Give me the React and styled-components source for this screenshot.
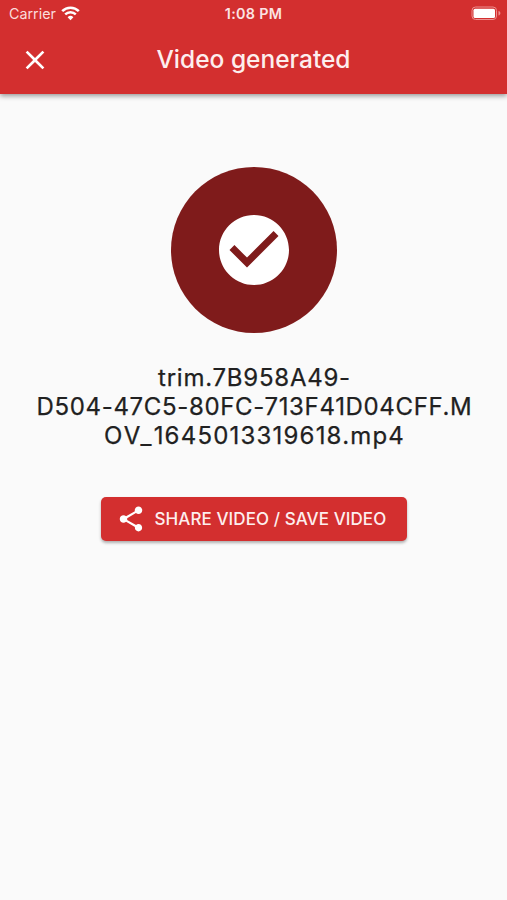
import styled, { createGlobalStyle } from "styled-components";
import { MdCheckCircle, MdClose, MdShare } from "react-icons/md";

const GlobalStyle = createGlobalStyle`
  * {
    box-sizing: border-box;
  }

  body {
    margin: 0;
    background: #fafafa;
    font-family: Inter, "Liberation Sans", sans-serif;
  }
`;

const StyledScreen = styled.div`
  height: 900px;
  overflow: hidden;
  background: #fafafa;
`;

const StyledHeader = styled.header`
  height: 94px;
  background: #d32f2f;
  color: #fff;
  box-shadow: 0 2px 5px rgba(0, 0, 0, 0.4);
`;

const StyledStatusBar = styled.div`
  height: 27px;
  padding: 0 6px 0 9px;
  display: grid;
  grid-template-columns: 1fr auto 1fr;
  align-items: center;
`;

const StyledCarrier = styled.div`
  display: flex;
  align-items: center;
  gap: 5px;
  font-size: 14.3px;
  color: #fbdcdc;
`;

const StyledTime = styled.div`
  margin-right: 3px;
  font-size: 14.3px;
  font-weight: 600;
  letter-spacing: 0.3px;
  color: #fbe3e3;
`;

const StyledBattery = styled.svg`
  justify-self: end;
`;

const StyledToolbar = styled.div`
  height: 65px;
  padding: 0 19px;
  display: grid;
  grid-template-columns: 32px 1fr 32px;
  align-items: center;
`;

const StyledIconButton = styled.button`
  display: flex;
  padding: 0;
  border: none;
  background: none;
  color: #fff;
`;

const StyledTitle = styled.h1`
  margin: 0;
  font-size: 24.5px;
  font-weight: 500;
  line-height: 29px;
  text-align: center;
  color: #fdeeee;
`;

const StyledContent = styled.main`
  display: flex;
  flex-direction: column;
  align-items: center;
  padding-top: 73px;
`;

const StyledBadge = styled.div`
  width: 166px;
  height: 166px;
  border-radius: 50%;
  display: flex;
  align-items: center;
  justify-content: center;
  background: #7f1b1b;
  color: #fff;
`;

const StyledFileName = styled.p`
  margin: 30px 0 0;
  padding-left: 2px;
  font-size: 24px;
  line-height: 29.2px;
  text-align: center;
  color: #212121;
  -webkit-text-stroke: 0.25px #212121;
`;

const StyledLine = styled.span`
  display: block;
  white-space: nowrap;
`;

const StyledPart = styled.span`
  letter-spacing: ${(props) => props.$spacing};
`;

const StyledShareButton = styled.button`
  width: 306px;
  height: 44px;
  margin-top: 46px;
  padding: 0 0 0 15px;
  display: flex;
  align-items: center;
  gap: 9px;
  border: none;
  border-radius: 5px;
  background: #d32f2f;
  color: #fff;
  box-shadow: 0 2px 3px rgba(0, 0, 0, 0.3);
`;

const StyledButtonText = styled.span`
  font-family: Inter, "Liberation Sans", sans-serif;
  font-size: 17px;
  font-weight: 500;
  letter-spacing: 0.08px;
  white-space: nowrap;
  color: #fdeeee;
`;

const fileNameLines = [
  [{ text: "trim.7B958A49-", spacing: "0.75px" }],
  [{ text: "D504-47C5-80FC-713F41D04CFF.M", spacing: "0.66px" }],
  [
    { text: "OV_", spacing: "2.2px" },
    { text: "1645013319618.mp4", spacing: "1.2px" },
  ],
];

const WifiIcon = () => (
  <svg width="19" height="15" viewBox="0 0 19 15" fill="none">
    <path d="M1.2 5.2a11.8 11.8 0 0 1 16.6 0" stroke="#fff" strokeWidth="2.6" />
    <path d="M4.2 8.4a7.5 7.5 0 0 1 10.6 0" stroke="#fff" strokeWidth="2.4" />
    <path d="M9.5 14.2 6.6 11.2a4.1 4.1 0 0 1 5.8 0z" fill="#fff" />
  </svg>
);

const BatteryIcon = () => (
  <StyledBattery width="31" height="15" viewBox="0 0 31 15" fill="none">
    <rect x="2" y="1" width="24.5" height="12.5" rx="3.5" stroke="#ec8f8f" />
    <rect x="3.5" y="2.7" width="21.5" height="9.2" rx="1.5" fill="#fff" />
    <path d="M28.5 5v4.5c1.2-.4 1.9-1.3 1.9-2.3S29.7 5.4 28.5 5z" fill="#ec8f8f" />
  </StyledBattery>
);

const App = () => {
  return (
    <>
      <GlobalStyle />
      <StyledScreen>
        <StyledHeader>
          <StyledStatusBar>
            <StyledCarrier>
              Carrier
              <WifiIcon />
            </StyledCarrier>
            <StyledTime>1:08 PM</StyledTime>
            <BatteryIcon />
          </StyledStatusBar>
          <StyledToolbar>
            <StyledIconButton aria-label="Close">
              <MdClose size={32} />
            </StyledIconButton>
            <StyledTitle>Video generated</StyledTitle>
          </StyledToolbar>
        </StyledHeader>
        <StyledContent>
          <StyledBadge>
            <MdCheckCircle size={84} />
          </StyledBadge>
          <StyledFileName>
            {fileNameLines.map((parts, i) => (
              <StyledLine key={i}>
                {parts.map((part) => (
                  <StyledPart key={part.text} $spacing={part.spacing}>
                    {part.text}
                  </StyledPart>
                ))}
              </StyledLine>
            ))}
          </StyledFileName>
          <StyledShareButton>
            <MdShare size={30} />
            <StyledButtonText>SHARE VIDEO / SAVE VIDEO</StyledButtonText>
          </StyledShareButton>
        </StyledContent>
      </StyledScreen>
    </>
  );
};

export default App;
